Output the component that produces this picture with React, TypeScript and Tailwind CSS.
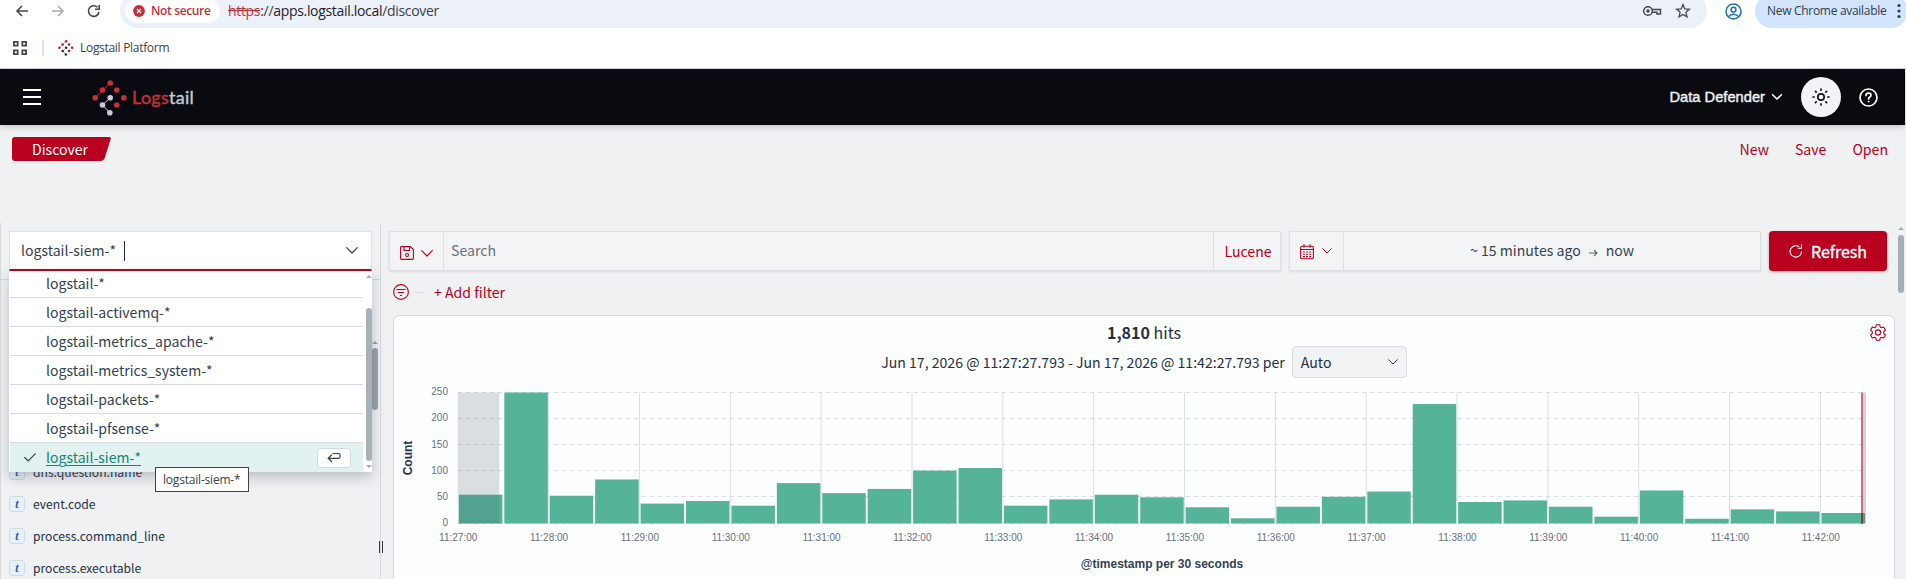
import React from 'react';

const indexPatterns = [
  'logstail-*',
  'logstail-activemq-*',
  'logstail-metrics_apache-*',
  'logstail-metrics_system-*',
  'logstail-packets-*',
  'logstail-pfsense-*',
];

const fields = ['dns.question.name', 'event.code', 'process.command_line', 'process.executable'];

const counts = [
  55, 250, 53, 84, 38, 43, 34, 77, 58, 66, 101, 106, 34, 46, 55, 50, 31, 10, 32, 51, 61, 228, 41, 44, 32, 13, 63, 9, 27,
  23, 20,
];

const Chevron = ({ className = '', w = 12, stroke = 1.2 }: { className?: string; w?: number; stroke?: number }) => (
  <svg width={w} height={w / 2 + 1} viewBox="0 0 12 7" fill="none" stroke="currentColor" strokeWidth={stroke} strokeLinecap="round" strokeLinejoin="round" className={className}>
    <path d="M.7.7 6 6 11.3.7" />
  </svg>
);

const logoNodes: [number, number, boolean][] = [
  [17.7, 3, true],
  [10, 10, true],
  [24.3, 10, true],
  [2.7, 17.7, true],
  [31.3, 17.7, true],
  [24.3, 25, true],
  [17.7, 17.7, false],
  [10, 25, false],
  [17.3, 32.7, false],
];

const LogoMark = ({ size, light, red, className = '' }: { size: number; light: string; red: string; className?: string }) => (
  <svg width={size} height={size} viewBox="0 0 35 36" className={className}>
    <path d="M17.7 3 2.7 17.7" stroke={red} strokeWidth=".9" fill="none" />
    <path d="M17.7 17.7 10 25l7.3 7.7" stroke={light} strokeWidth="1" fill="none" />
    {logoNodes.map(([x, y, isRed]) => (
      <circle key={`${x}-${y}`} cx={x} cy={y} r="2.8" fill={isRed ? red : light} />
    ))}
  </svg>
);

const BrowserBar = () => (
  <div className="h-[69px] bg-white border-b border-[#d9dadb] font-['Open_Sans',sans-serif] overflow-hidden">
    <div className="flex h-7 items-start">
      <svg width="120" height="24" fill="none" strokeWidth="1.6" className="shrink-0">
        <path d="M28 11H17.5M22 6l-5 5 5 5" stroke="#45474a" />
        <path d="M52 11h10.5M58 6l5 5-5 5" stroke="#a9abae" />
        <path d="M97.5 7.300A5.300 5.300 0 1 0 99 12" stroke="#45474a" />
        <path d="M99.200 5v4.300H95" stroke="#45474a" />
      </svg>
      <div className="-mt-1.5 flex h-[34px] w-[1587px] shrink-0 items-center rounded-full bg-[#ecf0f9] pl-[5px]">
        <div className="flex h-6 w-[95px] items-center rounded-full bg-white pl-2">
          <svg width="12" height="12" viewBox="0 0 12 12">
            <circle cx="6" cy="6" r="5.9" fill="#c5303a" />
            <path d="m4 4 4 4M8 4 4 8" stroke="#fff" strokeWidth="1.3" />
          </svg>
          <span className="ml-1.5 text-[12px] font-semibold tracking-[-0.35px] text-[#c0303a] whitespace-nowrap">Not secure</span>
        </div>
        <div className="ml-2 text-[14px] tracking-[-0.32px] text-[#3c4046] whitespace-nowrap">
          <span className="text-[#c0303a] line-through">https</span>://<span className="text-[#1f2227]">apps.logstail.local</span>/discover
        </div>
        <svg width="20" height="12" viewBox="0 0 20 12" fill="none" stroke="#45474a" strokeWidth="1.5" className="ml-auto mr-[13px]">
          <circle cx="6" cy="6" r="4.3" />
          <circle cx="6" cy="6" r="1.7" fill="#45474a" stroke="none" />
          <path d="M10 4.600h8.500v4.500h-3.500V7.300H10" />
        </svg>
        <svg width="16" height="16" viewBox="0 0 16 16" fill="none" stroke="#45474a" strokeWidth="1.3" className="mr-4">
          <path d="m8 1.600 1.800 4.300 4.600.4-3.500 3 1.100 4.500-4-2.400-4 2.400 1.100-4.500-3.500-3 4.600-.4z" />
        </svg>
      </div>
      <svg width="17" height="17" viewBox="0 0 17 17" fill="none" stroke="#1f6fbf" strokeWidth="1.5" className="ml-[18px] mt-[3px] shrink-0">
        <circle cx="8.5" cy="8.5" r="7.5" />
        <circle cx="8.5" cy="6.7" r="2.4" />
        <path d="M3.500 13.600c1.200-1.700 3-2.400 5-2.400s3.800.7 5 2.400" />
      </svg>
      <div className="-mt-1.5 ml-[13px] flex h-[34px] w-[153px] shrink-0 items-center rounded-full bg-[#d3e5fd] pl-3">
        <span className="text-[12px] tracking-[-0.3px] text-[#2d3c50] whitespace-nowrap">New Chrome available</span>
        <svg width="4" height="16" className="ml-[11px] shrink-0" fill="#2d3c50">
          <circle cx="2" cy="2.5" r="1.6" />
          <circle cx="2" cy="8" r="1.6" />
          <circle cx="2" cy="13.5" r="1.6" />
        </svg>
      </div>
    </div>
    <div className="flex h-10 items-center pl-[13px]">
      <svg width="14" height="14" fill="none" stroke="#45424b" strokeWidth="1.7">
        <path d="M.9.900h3.800v3.800H.9zM9.300.900h3.800v3.800H9.300zM.9 9.300h3.800v3.800H.9zM9.300 9.300h3.800v3.800H9.300z" />
      </svg>
      <div className="ml-[15px] h-4 w-0.5 bg-[#d3e5fd]" />
      <LogoMark size={16} red="#b8182f" light="#23262e" className="ml-3.5" />
      <span className="ml-1.5 text-[12px] tracking-[-0.3px] text-[#3c4046] whitespace-nowrap">Logstail Platform</span>
    </div>
  </div>
);

const Header = () => (
  <header className="relative z-10 flex h-14 w-[1905px] items-center bg-[#0a0b10] text-white shadow-[0_2px_6px_rgba(0,0,0,0.18)]">
    <div className="ml-[23px] flex w-[18px] flex-col gap-[5px]">
      <div className="h-0.5 bg-white" />
      <div className="h-0.5 bg-white" />
      <div className="h-0.5 bg-white" />
    </div>
    <LogoMark size={36} red="#c5303a" light="#c9ccd6" className="ml-[51px] mt-0.5" />
    <div className="ml-1 font-['Lato',sans-serif] text-[18px] leading-5 text-[#c4c9d2] [-webkit-text-stroke:0.4px]">
      <span className="tracking-[0.3px] text-[#c5303a]">Logs</span>
      <span className="tracking-[0.2px]">tail</span>
    </div>
    <div className="ml-auto flex items-center">
      <span className="font-['Liberation_Sans',sans-serif] text-[14.7px] text-[#f1f2f4] [-webkit-text-stroke:0.4px]">Data Defender</span>
      <Chevron w={10} stroke={1.8} className="ml-[7px]" />
      <div className="ml-[19px] flex size-10 items-center justify-center rounded-full bg-[#f1f3f6]">
        <svg width="18" height="18" viewBox="0 0 18 18" fill="none" stroke="#14161c" strokeWidth="1.7" strokeLinecap="round">
          <circle cx="9" cy="9" r="3.2" />
          <path d="M9 1v1.200M9 15.800V17M1 9h1.200M15.800 9H17M3.400 3.400l.8.8M13.800 13.800l.8.8M3.400 14.600l.8-.8M13.800 4.200l.8-.8" />
        </svg>
      </div>
      <svg width="19" height="19" viewBox="0 0 19 19" fill="none" stroke="#fff" strokeWidth="1.7" strokeLinecap="round" className="mr-[27px] ml-[18px]">
        <circle cx="9.5" cy="9.5" r="8.5" />
        <path d="M7 7.400c0-1.500 1.100-2.300 2.500-2.300S12 6 12 7.300c0 1.700-2.400 1.800-2.400 3.600" />
        <circle cx="9.6" cy="13.6" r=".5" fill="#fff" strokeWidth=".8" />
      </svg>
    </div>
  </header>
);

const SubNav = () => (
  <div className="flex h-[98px] items-start justify-between pr-[18px] pl-3 pt-3">
    <div className="relative flex h-6 w-[99px] items-center">
      <svg width="99" height="24" className="absolute inset-0">
        <path d="M3 0h94q2.500 0 1.600 2.300l-6 19Q91.700 24 89 24H3q-3 0-3-3V3q0-3 3-3z" fill="#b9001f" />
      </svg>
      <span className="relative pl-5 text-[14.1px] leading-6 text-white">Discover</span>
    </div>
    <div className="flex gap-[26px] text-[14.1px] leading-6 text-[#b9001f]">
      <span>New</span>
      <span>Save</span>
      <span>Open</span>
    </div>
  </div>
);

const PatternMenu = () => (
  <div className="absolute top-[48px] left-2 z-20 flex h-[201px] w-[363px] bg-white text-[14.05px] text-[#343f51] shadow-[0_5px_12px_rgba(60,70,90,0.3)]">
    <div className="ml-px w-[353px]">
      {indexPatterns.map((name, i) => (
        <div key={name} className={`flex items-center border-b border-[#d8dbdf] pl-9 ${i === 0 ? 'h-[27px] pb-0.5' : 'h-[29px]'}`}>
          {name}
        </div>
      ))}
      <div className="flex h-[29px] items-center bg-[#e2f2f1] text-[#148571]">
        <svg width="12" height="9" fill="none" stroke="#343f51" strokeWidth="1.2" strokeLinecap="round" className="ml-3.5">
          <path d="m.8 4.500 3.400 3.500L11.200.8" />
        </svg>
        <span className="ml-2.5 underline underline-offset-2">logstail-siem-*</span>
        <div className="ml-auto mr-3 flex h-5 w-[34px] items-center justify-center rounded-sm border border-[#d3dae6] bg-white">
          <svg width="14" height="11" viewBox="0 0 14 11" fill="none" stroke="#343f51" strokeWidth="1.2" strokeLinecap="round">
            <path d="M6 1.500h5.500q1.500 0 1.500 1.500v1.800q0 1.500-1.500 1.500H1.500M4.500 3 1.200 6.300l3.300 3.200" />
          </svg>
        </div>
      </div>
    </div>
    <div className="ml-[3px] flex w-1.5 flex-col items-center justify-between pt-1 pb-1">
      <svg width="6" height="3" fill="#a4aab3"><path d="M0 3 3 0l3 3z" /></svg>
      <div className="mt-[26px] h-[153px] w-1.5 rounded-full bg-[#a8b1ba]" />
      <svg width="6" height="3" fill="#a4aab3"><path d="M0 0h6L3 3z" /></svg>
    </div>
  </div>
);

const Sidebar = () => (
  <aside className="relative h-full w-[381px] shrink-0 border-r border-l border-[#d5d9de]">
    <div className="-ml-px h-[57px] w-[381px] border-b border-[#d5d9de] pt-2 pl-[9px]">
      <div className="flex h-10 w-[363px] items-center border border-b-2 border-[#dfe2e7] border-b-[#b9001f] bg-white pl-[11px] text-[14.05px] text-[#343f51]">
        logstail-siem-*
        <div className="ml-2 h-5 w-px bg-[#1f2a3d]" />
        <Chevron className="mr-[13px] ml-auto" />
      </div>
    </div>
    <PatternMenu />
    <div className="absolute top-[118px] left-[371px] flex flex-col items-center">
      <svg width="6" height="3" fill="#9a9fa8"><path d="M0 3 3 0l3 3z" /></svg>
      <div className="mt-1 h-[62px] w-1.5 rounded-full bg-[#9aa0a9]" />
    </div>
    <div className="mt-[176px] pl-2">
      {fields.map((name) => (
        <div key={name} className="flex h-8 items-center text-[12.15px] text-[#26303f]">
          <span className="flex size-4 items-center justify-center rounded-[3px] border border-[#cfd8e8] bg-[#e9eff8] font-['Liberation_Serif',serif] text-[12px] font-bold italic text-[#33629f]">
            t
          </span>
          <span className="ml-2">{name}</span>
        </div>
      ))}
    </div>
    <div className="absolute top-[244px] left-[154px] z-30 flex h-[25px] w-[94px] items-center border border-[#463f46] bg-white pl-[7px] font-['Open_Sans',sans-serif] text-[12px] tracking-[-0.2px] text-[#3c4046] whitespace-nowrap">
      logstail-siem-*
    </div>
    <div className="absolute top-[318px] left-[378px] z-20 h-3 w-1 border-r border-l border-[#343741]" />
  </aside>
);

const QueryBar = () => (
  <div className="flex h-10 text-[14.1px]">
    <div className="flex w-[892px] border border-[#dcdfe6] bg-[#f3f4f6] shadow-[0_1px_2px_rgba(100,110,160,0.15)]">
      <div className="flex w-[54px] items-center border-r border-[#dcdfe6] pl-2.5 pt-1 text-[#b9001f]">
        <svg width="14" height="14" fill="none" stroke="currentColor" strokeWidth="1.1">
          <path d="M1.500.600h9L13.400 3.500v9q0 .9-.9.900h-11q-.9 0-.9-.9v-11q0-.9.9-.9zM4 .6V4.500h5.500V.6" />
          <circle cx="7" cy="9" r="1.5" />
        </svg>
        <Chevron className="ml-[7px]" />
      </div>
      <span className="flex flex-1 items-center pb-px pl-[7px] text-[#69707d]">Search</span>
      <div className="flex w-[67px] items-center justify-center border-l border-[#dcdfe6] pt-px pl-0.5 text-[#b9001f]">Lucene</div>
    </div>
    <div className="ml-2 flex w-[472px] border border-[#dcdfe6] bg-[#f3f4f6] shadow-[0_1px_2px_rgba(100,110,160,0.15)]">
      <div className="flex w-[54px] items-center border-r border-[#dcdfe6] pl-2.5 text-[#b9001f]">
        <svg width="14" height="16" viewBox="0 0 14 16" fill="none" stroke="currentColor" strokeWidth="1.1" className="mt-0.5">
          <rect x=".6" y="2.3" width="12.8" height="12.5" rx="1.5" />
          <path d="M.6 5.500h12.800M4 .3v3.500M10 .3v3.500" />
          <path d="M3 8h8.500M3 10.300h8.500M3 12.600h8.500" strokeDasharray="1.9 1.2" />
        </svg>
        <Chevron w={10} className="ml-2" />
      </div>
      <div className="flex flex-1 items-center justify-center pb-px text-[#343f51]">
        ~ 15 minutes ago
        <svg width="9" height="8" fill="none" stroke="#55675f" strokeWidth="1.1" className="mx-2 mt-1">
          <path d="M0 4h8M5 1l3 3-3 3" />
        </svg>
        now
      </div>
    </div>
    <button className="ml-2 flex w-[118px] items-center justify-center rounded bg-[#b9001f] pb-px text-white shadow-[0_1px_3px_rgba(0,0,0,0.3)]">
      <svg width="14" height="14" viewBox="0 0 14 14" fill="none" stroke="currentColor" strokeWidth="1.1" className="mr-2">
        <path d="M12.500 7.500A5.700 5.700 0 1 1 10.300 2.900" />
        <path d="M12.500.3v4H8.700" />
      </svg>
      <span className="text-[16px] [-webkit-text-stroke:0.35px]">Refresh</span>
    </button>
  </div>
);

const X0 = 63.8;
const STEP = 45.42;
const Y0 = 143.5;
const SCALE = 131 / 250;

const Histogram = () => (
  <svg width="1500" height="200" className="mt-0.5 block font-['Liberation_Sans',sans-serif]">
    {counts.map((_, i) =>
      i % 2 === 0 && i > 0 ? <path key={i} d={`M${X0 + STEP * i} 12.5v131`} stroke="#d9dfe8" /> : null,
    )}
    {[0, 50, 100, 150, 200, 250].map((v) => (
      <g key={v}>
        <path d={`M${X0} ${Math.round(Y0 - v * SCALE) - 0.5}h1408`} stroke="#d5dce6" strokeDasharray="4 4" />
        <text x="54" y={Y0 - v * SCALE + 2.6} textAnchor="end" fontSize="10" fill="#69707d">
          {v}
        </text>
      </g>
    ))}
    {counts.map((v, i) => (
      <rect key={i} x={X0 + STEP * i + 1.1} y={Y0 - v * SCALE} width="43.5" height={v * SCALE} fill="#54b399" />
    ))}
    {counts.map((_, i) =>
      i % 2 === 0 ? (
        <text key={i} x={X0 + STEP * i + 0.4} y="161" textAnchor="middle" fontSize="10" fill="#69707d">
          {`11:${27 + i / 2}:00`}
        </text>
      ) : null,
    )}
    <rect x={X0} y="12.5" width="41.5" height="131" fill="#52606b" opacity=".2" />
    <rect x="1468.5" y="12.5" width="3.5" height="131" fill="#52606b" opacity=".25" />
    <path d="M1468 12.5v131" stroke="#bd1f35" strokeWidth="2" opacity=".65" />
    <path d="M1468 133v10.5" stroke="#7d4038" strokeWidth="2" />
    <text transform="translate(17.5 78) rotate(-90)" textAnchor="middle" fontSize="12" fontWeight="700" fill="#26324a">
      Count
    </text>
    <text x="768" y="188" textAnchor="middle" fontSize="12" fontWeight="700" fill="#343f51">
      @timestamp per 30 seconds
    </text>
  </svg>
);

const Results = () => (
  <section className="h-[300px] w-[1502px] rounded-t-md border border-[#d5d8dc] bg-[#fdfeff]">
    <div className="relative text-center text-[16px] leading-[33px] text-[#26303f]">
      <span className="font-bold">1,810</span> hits
      <svg width="16" height="17" viewBox="0 0 16 17" fill="none" stroke="#b9001f" strokeWidth="1.1" strokeLinejoin="round" className="absolute top-2 right-2">
        <path d="M6.300.800h3.400l.5 2.200 1.300.8 2.200-.8 1.700 3-1.700 1.600v1.800l1.700 1.600-1.700 3-2.200-.8-1.300.8-.5 2.200H6.300l-.5-2.200-1.300-.8-2.200.8-1.700-3 1.700-1.600V7.600L.6 6l1.700-3 2.200.8L5.800 3z" />
        <circle cx="8" cy="8.5" r="2.6" />
      </svg>
    </div>
    <div className="-mt-[3px] flex h-8 items-center justify-center text-[14.1px] text-[#26303f]">
      <span>Jun 17, 2026 @ 11:27:27.793 - Jun 17, 2026 @ 11:42:27.793 per</span>
      <div className="ml-[7px] flex h-8 w-[115px] items-center rounded-sm border border-[#d9dde3] bg-[#f2f3f5] pl-2">
        Auto
        <Chevron w={10} className="mr-2 ml-auto" />
      </div>
    </div>
    <Histogram />
  </section>
);

export default function App() {
  return (
    <div className="h-[579px] w-[1906px] overflow-hidden bg-[#f0f1f3] font-['Noto_Sans_CJK_JP',sans-serif] leading-none">
      <BrowserBar />
      <Header />
      <SubNav />
      <div className="flex h-[356px]">
        <Sidebar />
        <main className="w-[1514px] shrink-0 pt-2 pl-2">
          <QueryBar />
          <div className="flex h-[44px] items-center pb-0.5 pl-1 text-[14.1px] text-[#b9001f]">
            <svg width="16" height="16" fill="none" stroke="currentColor" strokeWidth="1.1">
              <circle cx="8" cy="8" r="7.4" />
              <path d="M3.500 5.500h9M5 8.500h6M7 11.500h2" />
            </svg>
            <div className="mr-[9px] ml-1.5 h-px w-2.5 bg-[#d3dae6]" />
            <span>+ Add filter</span>
          </div>
          <div className="pl-1">
            <Results />
          </div>
        </main>
        <div className="ml-[3px] flex w-1.5 flex-col items-center pt-1">
          <svg width="6" height="3" fill="#a4aab3"><path d="M0 3 3 0l3 3z" /></svg>
          <div className="mt-[5px] h-[58px] w-1.5 rounded-full bg-[#a8aeb8]" />
        </div>
      </div>
    </div>
  );
}
